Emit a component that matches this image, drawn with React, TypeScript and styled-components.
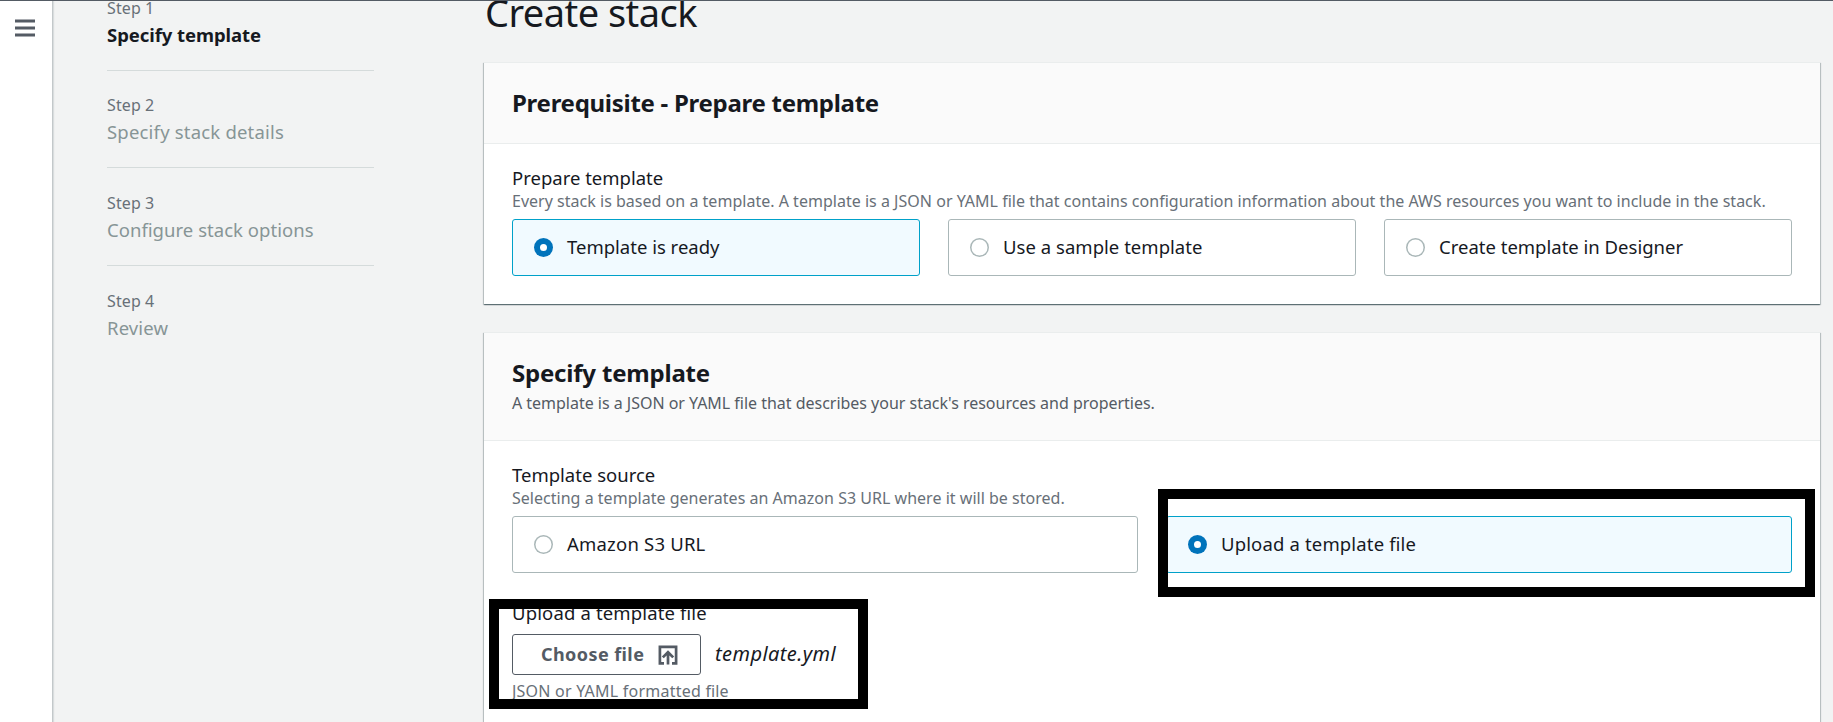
import React from "react";
import styled, { createGlobalStyle, css } from "styled-components";

const GlobalStyle = createGlobalStyle`
  *, *::before, *::after { box-sizing: border-box; }
  html, body { margin: 0; padding: 0; overflow: hidden; }
  body {
    font-family: "Noto Sans", "Open Sans", sans-serif;
    font-feature-settings: "liga" 1;
    background: #f2f3f3;
    color: #16191f;
  }
`;

const Page = styled.div`
  display: flex;
  height: 722px;
  overflow: hidden;
  border-top: 1px solid #545b64;
`;

const NavRail = styled.nav`
  flex: none;
  width: 53px;
  padding: 18px 0 0 15px;
  background: #fff;
  border-right: 1px solid #c3c8ca;
  box-shadow: 1px 0 1px rgba(0, 28, 36, 0.1);
`;

const MenuButton = styled.button`
  display: block;
  padding: 0;
  border: 0;
  background: none;
  svg { display: block; }
`;

const StepList = styled.ol`
  flex: none;
  width: 267px;
  margin: -28px 110px 0 54px;
  padding: 0;
  list-style: none;
`;

const StepItem = styled.li`
  padding: 22.6px 0 20.07px;
  border-bottom: 1px solid #d5dbdb;
  &:last-child { border-bottom: 0; }
`;

const StepNumber = styled.div`
  font-size: 16px;
  line-height: 24px;
  color: #687078;
  letter-spacing: 0.1px;
`;

const StepTitle = styled.div<{ $active?: boolean; $spacing?: number }>`
  font-size: 18.5px;
  line-height: 30px;
  white-space: nowrap;
  color: #879596;
  letter-spacing: ${(p) => p.$spacing ?? 0}px;
  ${(p) => p.$active && css`
    color: #16191f;
    font-weight: 700;
  `}
`;

const Main = styled.main`
  flex: none;
  width: 1336px;
`;

const PageTitle = styled.h1`
  margin: -9px 0 29px;
  padding-left: 1px;
  font-size: 38px;
  line-height: 41px;
  font-weight: 400;
  letter-spacing: -0.55px;
`;

const Card = styled.section`
  margin-bottom: 28px;
  background: #fff;
  border-top: 1px solid #eaeded;
  box-shadow: 0 1px 1px 0 rgba(0, 28, 36, 0.42),
    1px 1px 1px 0 rgba(0, 28, 36, 0.18),
    -1px 1px 1px 0 rgba(0, 28, 36, 0.18);
`;

const CardHeader = styled.header`
  padding: 24px 28px;
  background: #fafafa;
  border-bottom: 1px solid #eaeded;
`;

const CardTitle = styled.h2<{ $spacing: number }>`
  margin: 0;
  font-size: 24px;
  line-height: 32px;
  font-weight: 700;
  letter-spacing: ${(p) => p.$spacing}px;
`;

const CardBody = styled.div`
  padding: 22px 28px 28px;
`;

const FieldLabel = styled.div`
  font-size: 18.5px;
  line-height: 24px;
  letter-spacing: 0;
`;

const Description = styled.p<{ $spacing?: number }>`
  margin: 0;
  font-size: 16px;
  line-height: 22px;
  color: #687078;
  white-space: nowrap;
  letter-spacing: ${(p) => p.$spacing ?? 0}px;
`;

const HeaderDescription = styled(Description)`
  padding: 3px 0 2px;
  color: #545b64;
`;

const Options = styled.div<{ $columns: number }>`
  display: grid;
  grid-template-columns: repeat(${(p) => p.$columns}, 1fr);
  gap: 28px;
  margin-top: 7px;
`;

const OptionTile = styled.label<{ $selected?: boolean }>`
  display: flex;
  align-items: center;
  gap: 14px;
  height: 57px;
  padding-left: 21px;
  border: 1px solid ${(p) => (p.$selected ? "#00a1c9" : "#aab7b8")};
  border-radius: 3px;
  background: ${(p) => (p.$selected ? "#f1faff" : "#fff")};
`;

const OptionText = styled.span<{ $spacing: number }>`
  padding-bottom: 1px;
  font-size: 18.5px;
  line-height: 24px;
  letter-spacing: ${(p) => p.$spacing}px;
`;

const RadioMark = styled.span<{ $selected?: boolean }>`
  flex: none;
  width: 19px;
  height: 19px;
  border-radius: 50%;
  background: #fff;
  box-shadow: inset 0 0 0 ${(p) => (p.$selected ? "6px #0073bb" : "1.5px #aab7b8")};
`;

const UploadField = styled.div`
  margin-top: 28px;
`;

const UploadLabel = styled(FieldLabel)`
  letter-spacing: 0.14px;
`;

const FileRow = styled.div`
  display: flex;
  align-items: center;
  gap: 14px;
  margin: 9px 0 5px;
`;

const FileButton = styled.button`
  display: flex;
  align-items: center;
  justify-content: space-between;
  width: 189px;
  height: 41px;
  padding: 0 22px 0 28px;
  border: 1px solid #545b64;
  border-radius: 3px;
  background: #fff;
  color: #545b64;
  white-space: nowrap;
  svg { flex: none; }
`;

const FileButtonText = styled.span`
  padding-bottom: 2px;
  font: 700 18px/24px "Noto Sans", "Open Sans", sans-serif;
  font-feature-settings: "liga" 0;
  letter-spacing: 0.42px;
`;

const FileName = styled.em`
  padding-bottom: 2px;
  font-size: 20px;
  line-height: 24px;
  letter-spacing: 0.42px;
`;

/* Frames drawn over the form to call out the fields to fill in */
const Highlight = styled.div<{ $x: number; $y: number; $w: number; $h: number }>`
  position: absolute;
  left: ${(p) => p.$x}px;
  top: ${(p) => p.$y}px;
  width: ${(p) => p.$w}px;
  height: ${(p) => p.$h}px;
  border: 10px solid #000;
  pointer-events: none;
`;

const MenuIcon = () => (
  <svg width="20" height="18" viewBox="0 0 20 18" stroke="#545b64" strokeWidth="2.8">
    <path d="M0 2h20M0 9h20M0 16h20" />
  </svg>
);

const UploadIcon = () => (
  <svg width="20" height="20" viewBox="0 0 20 20" fill="none" stroke="#545b64" strokeWidth="2.7">
    <path d="M6 18.3H1.9V1.9h16.2v16.4H14" />
    <path d="M10 19.6V7.5M4.8 12.4L10 7.2l5.2 5.2" />
  </svg>
);

const steps = [
  { title: "Specify template", spacing: -0.06 },
  { title: "Specify stack details", spacing: 0.19 },
  { title: "Configure stack options", spacing: 0.04 },
  { title: "Review", spacing: 0.12 },
];

function Option({ label, selected, spacing = 0 }: { label: string; selected?: boolean; spacing?: number }) {
  return (
    <OptionTile $selected={selected}>
      <RadioMark $selected={selected} />
      <OptionText $spacing={spacing}>{label}</OptionText>
    </OptionTile>
  );
}

export default function App() {
  return (
    <>
      <GlobalStyle />
      <Page>
        <NavRail>
          <MenuButton aria-label="Open navigation"><MenuIcon /></MenuButton>
        </NavRail>
        <StepList>
          {steps.map((step, i) => (
            <StepItem key={step.title}>
              <StepNumber>Step {i + 1}</StepNumber>
              <StepTitle $active={i === 0} $spacing={step.spacing}>{step.title}</StepTitle>
            </StepItem>
          ))}
        </StepList>
        <Main>
          <PageTitle>Create stack</PageTitle>
          <Card>
            <CardHeader>
              <CardTitle $spacing={-0.28}>Prerequisite - Prepare template</CardTitle>
            </CardHeader>
            <CardBody>
              <FieldLabel>Prepare template</FieldLabel>
              <Description $spacing={0.018}>
                Every stack is based on a template. A template is a JSON or YAML file that contains
                configuration information about the AWS resources you want to include in the stack.
              </Description>
              <Options $columns={3}>
                <Option label="Template is ready" selected />
                <Option label="Use a sample template" spacing={0.03} />
                <Option label="Create template in Designer" />
              </Options>
            </CardBody>
          </Card>
          <Card>
            <CardHeader>
              <CardTitle $spacing={-0.2}>Specify template</CardTitle>
              <HeaderDescription $spacing={-0.02}>
                A template is a JSON or YAML file that describes your stack's resources and properties.
              </HeaderDescription>
            </CardHeader>
            <CardBody>
              <FieldLabel>Template source</FieldLabel>
              <Description $spacing={0.02}>
                Selecting a template generates an Amazon S3 URL where it will be stored.
              </Description>
              <Options $columns={2}>
                <Option label="Amazon S3 URL" spacing={0.2} />
                <Option label="Upload a template file" spacing={0.15} selected />
              </Options>
              <UploadField>
                <UploadLabel>Upload a template file</UploadLabel>
                <FileRow>
                  <FileButton>
                    <FileButtonText>Choose file</FileButtonText>
                    <UploadIcon />
                  </FileButton>
                  <FileName>template.yml</FileName>
                </FileRow>
                <Description $spacing={0.23}>JSON or YAML formatted file</Description>
              </UploadField>
            </CardBody>
          </Card>
        </Main>
      </Page>
      <Highlight $x={1158} $y={489} $w={657} $h={108} />
      <Highlight $x={489} $y={599} $w={379} $h={110} />
    </>
  );
}
